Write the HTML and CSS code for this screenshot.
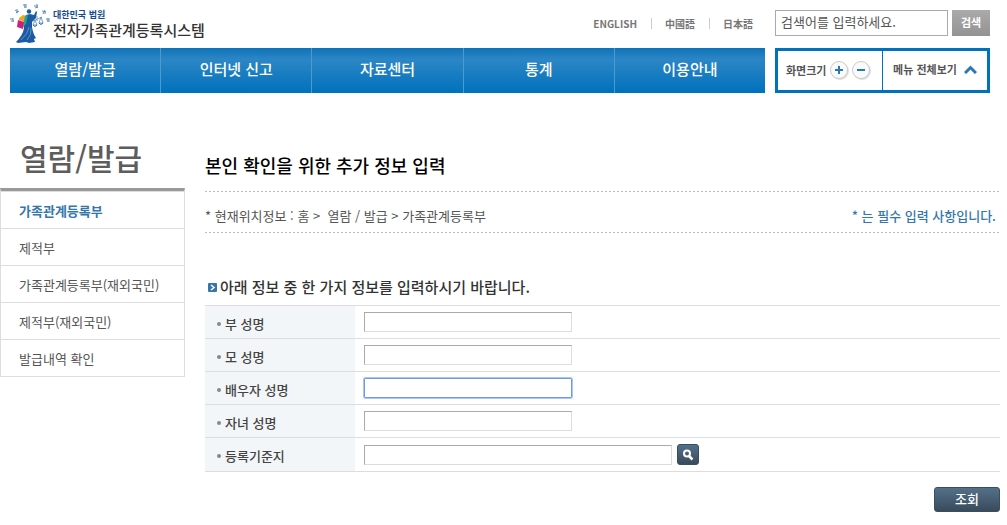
FILE: index.html
```html
<!DOCTYPE html>
<html lang="ko">
<head>
<meta charset="utf-8">
<meta name="viewport" content="width=device-width, initial-scale=1">
<title>전자가족관계등록시스템</title>
<link rel="stylesheet" href="styles.css">
</head>
<body>
<header class="header">
  <div class="topbar">
    <a class="logo" href="#">
      <svg class="logo-mark" viewBox="0 0 44 42" width="44" height="42" aria-hidden="true">
        <g fill="none" stroke="#5f8fbd" stroke-width="1">
          <path d="M0 17h3M1 19h3M3 16v4M5 8l3 2M6 11l3-2M7 7v4M13 3h4M14 5h3M15 2v4M24 4h4M25 6l3-1M27 2v4M32 9l4 1M33 12l2-4M35 9v3M36 17h4M37 19h3M38 16v4"/>
        </g>
        <path d="M16 13l4-1 4 1 2-4 1 1-1 6-4 4v5q1 7 4 11l-2 1 1 3-6 1-3-1-8 1-2-1q7-7 8-14l-1-5z" fill="#1b5ba4"/>
        <circle cx="19" cy="9.500" r="2.200" fill="#1b5ba4"/>
        <path d="M9 16l4-3 4 1-2 6-6-2z" fill="#f5a51b"/>
        <path d="M8 18l6 2-1 7-6-2z" fill="#d21c7c"/>
        <path d="M15 14l3-1-2 9-3 3z" fill="#18a795"/>
        <path d="M11 38q7-6 8-13M17 38q5-5 4-12" fill="none" stroke="#6fa0d0" stroke-width=".8"/>
        <path d="M23 19l9-4M27 14v5M25 18l-2 5h4zM31 15l-2 6h4z" fill="none" stroke="#5c8fc0" stroke-width=".8"/>
        <path d="M23 23q2 3 4 0M29 21q2 3 4 0" fill="none" stroke="#2c6499"/>
      </svg>
      <span class="logo-text"><span class="logo-sub">대한민국 법원</span><span class="logo-name">전자가족관계등록시스템</span></span>
    </a>
    <div class="languages">
      <a href="#">ENGLISH</a><a href="#">中國語</a><a href="#">日本語</a>
    </div>
    <form class="search">
      <input class="search-box" type="text" aria-label="검색어" placeholder="검색어를 입력하세요.">
      <button class="search-button" type="button">검색</button>
    </form>
  </div>
  <div class="menubar">
    <nav class="nav">
      <a href="#">열람/발급</a><a href="#">인터넷 신고</a><a href="#">자료센터</a><a href="#">통계</a><a href="#">이용안내</a>
    </nav>
    <div class="tools">
      <div class="zoom">
        <span>화면크기</span>
        <button class="round" type="button" aria-label="확대"><svg viewBox="0 0 8 8" width="8" height="8"><path d="M0 4h8M4 0v8" stroke="#2878b8" stroke-width="2"/></svg></button>
        <button class="round" type="button" aria-label="축소"><svg viewBox="0 0 8 8" width="8" height="8"><path d="M0 4h8" stroke="#2878b8" stroke-width="2"/></svg></button>
      </div>
      <button class="all-menu" type="button">메뉴 전체보기
        <svg viewBox="0 0 13 9" width="13" height="9" aria-hidden="true"><path d="M1 8l5.500-5.500L12 8" fill="none" stroke="#2878b8" stroke-width="3"/></svg>
      </button>
    </div>
  </div>
</header>
<div class="layout">
  <aside class="sidebar">
    <h2 class="side-title">열람/발급</h2>
    <nav class="side-menu">
      <a class="current" href="#">가족관계등록부</a>
      <a href="#">제적부</a>
      <a href="#">가족관계등록부(재외국민)</a>
      <a href="#">제적부(재외국민)</a>
      <a href="#">발급내역 확인</a>
    </nav>
  </aside>
  <main class="content">
    <h1 class="page-title">본인 확인을 위한 추가 정보 입력</h1>
    <div class="location">
      <span>* 현재위치정보 : 홈 &gt;&nbsp; 열람 / 발급 &gt; 가족관계등록부</span>
      <strong>* 는 필수 입력 사항입니다.</strong>
    </div>
    <form>
      <h3 class="form-title">
        <svg viewBox="0 0 9 9" width="9" height="9" aria-hidden="true"><rect width="9" height="9" rx="1" fill="#3577ad"/><path d="M3 2l3 2.500L3 7" fill="none" stroke="#fff" stroke-width="1.500"/></svg>
        아래 정보 중 한 가지 정보를 입력하시기 바랍니다.
      </h3>
      <table class="fields">
        <tr><th scope="row"><label for="father">부 성명</label></th><td><input class="field" id="father" type="text"></td></tr>
        <tr><th scope="row"><label for="mother">모 성명</label></th><td><input class="field" id="mother" type="text"></td></tr>
        <tr><th scope="row"><label for="spouse">배우자 성명</label></th><td><input class="field field-active" id="spouse" type="text"></td></tr>
        <tr><th scope="row"><label for="child">자녀 성명</label></th><td><input class="field" id="child" type="text"></td></tr>
        <tr><th scope="row"><label for="base">등록기준지</label></th><td><div class="lookup"><input class="field field-wide" id="base" type="text"><button class="find" type="button" aria-label="찾기"><svg viewBox="0 0 12 12" width="12" height="12"><circle cx="5" cy="4.500" r="3" fill="none" stroke="#fff" stroke-width="2"/><path d="M7 7l3.500 3.500" stroke="#fff" stroke-width="2.500"/></svg></button></div></td></tr>
      </table>
      <div class="actions"><button class="submit" type="button">조회</button></div>
    </form>
  </main>
</div>
</body>
</html>
```
FILE: styles.css
```css
* { box-sizing: border-box; }
body {
  margin: 0;
  background: #fff;
  color: #555;
  font: 13px/20px "Noto Sans CJK KR", sans-serif;
}
a { color: inherit; text-decoration: none; }
button, input { font-family: inherit; margin: 0; }
button { cursor: pointer; padding: 0; }
h1, h2, h3 { margin: 0; }

.header { padding: 0 17px 0 10px; }
.topbar { display: flex; height: 48px; align-items: flex-start; }
.logo { display: flex; padding-top: 2px; }
.logo-mark { margin-right: -1px; }
.logo-text { display: flex; flex-direction: column; padding-top: 6px; white-space: nowrap; }
.logo-sub { color: #174b8d; font-size: 9px; line-height: 13px; font-weight: 700; }
.logo-name { color: #333; font-size: 15px; line-height: 18px; font-weight: 500; }
.languages {
  display: flex;
  margin-left: auto;
  padding-top: 18px;
  font-size: 10px;
  line-height: 11px;
  font-weight: 700;
  color: #777;
}
.languages a + a { margin-left: 14px; padding-left: 13px; border-left: 1px solid #ccc; }
.search { display: flex; gap: 4px; width: 215px; margin-left: 22px; padding-top: 10px; }
.search-box {
  flex: 1;
  min-width: 0;
  height: 26px;
  padding: 0 5px 3px;
  border: 1px solid #aaa;
  font-size: 13px;
}
.search-box::placeholder { color: #555; opacity: 1; }
.search-button {
  width: 38px;
  height: 26px;
  border: 0;
  background: linear-gradient(#aaa, #939393);
  color: #fff;
  font-size: 11px;
  line-height: 22px;
  padding-bottom: 3px;
  font-weight: 700;
}
.menubar { display: flex; gap: 10px; height: 45px; }
.nav { display: flex; flex: 1; background: linear-gradient(#0d72b9, #2c86c5 25%, #0071bc); }
.nav a {
  flex: 1;
  color: #fff;
  font-size: 15px;
  line-height: 42px;
  font-weight: 500;
  text-align: center;
}
.nav a + a { border-left: 1px solid #4c9bd0; }
.tools { display: flex; width: 215px; border: 3px solid #0071bc; font-size: 11px; font-weight: 700; color: #555; }
.zoom { display: flex; align-items: center; gap: 4px; width: 105px; padding: 0 0 2px 8px; border-right: 1px solid #0071bc; }
.zoom span { line-height: 36px; }
.round {
  display: grid;
  place-items: center;
  width: 18px;
  height: 18px;
  border: 1px solid #ccc;
  border-radius: 50%;
  background: #fafafa;
  box-shadow: 1px 1px 1px #ddd;
}
.all-menu { display: flex; flex: 1; align-items: center; justify-content: center; gap: 7px; padding: 0 0 3px; border: 0; background: none; color: #555; font-size: 11px; font-weight: 700; }

.layout { display: flex; gap: 20px; padding: 43px 7px 0 0; }
.sidebar { width: 185px; flex: none; }
.side-title { height: 52px; padding-left: 20px; color: #5d5d5d; font-size: 30px; line-height: 42px; font-weight: 500; }
.side-menu { border: 1px solid #ddd; border-top: 3px solid #999; }
.side-menu a { display: block; height: 37px; padding: 0 18px; border-top: 1px solid #ddd; line-height: 38px; }
.side-menu .current { color: #3577ad; font-weight: 700; }

.content { flex: 1; min-width: 0; }
.page-title { height: 55px; color: #000; font-size: 18px; line-height: 58px; font-weight: 500; }
.location {
  display: flex;
  justify-content: space-between;
  height: 42px;
  padding-right: 4px;
  line-height: 50px;
  background:
    repeating-linear-gradient(90deg, #bbb 0 2px, transparent 2px 4px) top / 100% 1px no-repeat,
    repeating-linear-gradient(90deg, #bbb 0 2px, transparent 2px 4px) bottom / 100% 1px no-repeat;
}
.location strong { color: #3577ad; font-weight: 500; }
.form-title {
  display: flex;
  align-items: center;
  gap: 3px;
  margin-top: 42px;
  padding: 0 0 6px 3px;
  color: #333;
  font-size: 15px;
  line-height: 24px;
  font-weight: 500;
}
.fields { width: 100%; border-collapse: collapse; }
.fields tr { height: 33px; border-top: 1px solid #ddd; border-bottom: 1px solid #ddd; }
.fields th { width: 150px; padding: 3px 0 0 12px; background: #f2f6f9; color: #444; font-weight: 500; text-align: left; }
.fields td { padding: 0 0 0 9px; }
.fields label { display: flex; align-items: center; gap: 4px; }
.fields label::before { content: ""; width: 4px; height: 4px; border-radius: 50%; background: #888; }
.field { display: block; width: 208px; height: 20px; border: 1px solid #ddd; border-top-color: #aaa; border-left-color: #aaa; }
.field-active { border-color: #7498db; outline: 1px solid #a6c7ff; border-radius: 1px; }
.field-wide { width: 308px; }
.lookup { display: flex; align-items: center; gap: 5px; height: 33px; }
.find, .submit { border: 1px solid #394f60; border-radius: 3px; background: linear-gradient(#53708a, #394b5b); color: #fff; }
.find { display: grid; place-items: center; width: 22px; height: 21px; }
.actions { display: flex; justify-content: flex-end; padding-top: 15px; }
.submit { width: 66px; height: 25px; padding-bottom: 2px; font-size: 13px; line-height: 20px; font-weight: 500; }
```
